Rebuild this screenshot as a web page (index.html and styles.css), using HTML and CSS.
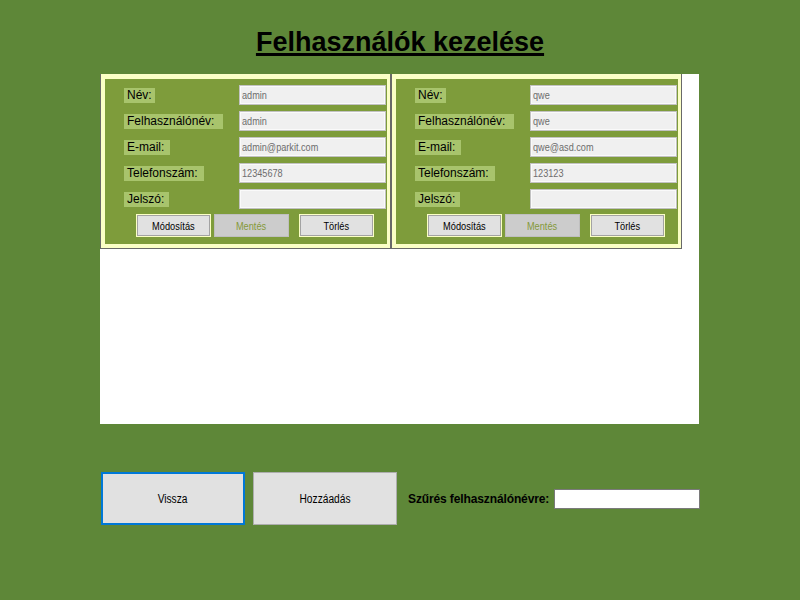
FILE: index.html
```html
<!DOCTYPE html>
<html lang="hu">
<head>
<meta charset="utf-8">
<title>Felhasználók kezelése</title>
<link rel="stylesheet" href="styles.css">
</head>
<body>
<h1 class="title">Felhasználók kezelése</h1>
<div class="panel">
  <div class="card">
    <div class="card-body">
      <div class="fields">
        <span class="lbl w-nev">Név:</span><div class="inp"><span class="sq">admin</span></div>
        <span class="lbl w-user">Felhasználónév:</span><div class="inp"><span class="sq">admin</span></div>
        <span class="lbl w-mail">E-mail:</span><div class="inp"><span class="sq">admin@parkit.com</span></div>
        <span class="lbl w-tel">Telefonszám:</span><div class="inp"><span class="sq">12345678</span></div>
        <span class="lbl w-pass">Jelszó:</span><div class="inp"></div>
      </div>
      <div class="actions">
        <button class="cbtn"><span class="sqc">Módosítás</span></button>
        <button class="cbtn save" disabled><span class="sqc">Mentés</span></button>
        <button class="cbtn del"><span class="sqc">Törlés</span></button>
      </div>
    </div>
  </div>
  <div class="card">
    <div class="card-body">
      <div class="fields">
        <span class="lbl w-nev">Név:</span><div class="inp"><span class="sq">qwe</span></div>
        <span class="lbl w-user">Felhasználónév:</span><div class="inp"><span class="sq">qwe</span></div>
        <span class="lbl w-mail">E-mail:</span><div class="inp"><span class="sq">qwe@asd.com</span></div>
        <span class="lbl w-tel">Telefonszám:</span><div class="inp"><span class="sq">123123</span></div>
        <span class="lbl w-pass">Jelszó:</span><div class="inp"></div>
      </div>
      <div class="actions">
        <button class="cbtn"><span class="sqc">Módosítás</span></button>
        <button class="cbtn save" disabled><span class="sqc">Mentés</span></button>
        <button class="cbtn del"><span class="sqc">Törlés</span></button>
      </div>
    </div>
  </div>
</div>
<div class="bottom">
  <button class="bbtn focus"><span class="sqb">Vissza</span></button>
  <button class="bbtn add"><span class="sqb">Hozzáadás</span></button>
  <span class="filter-lbl">Szűrés felhasználónévre:</span>
  <div class="filter-inp"></div>
</div>
</body>
</html>
```
FILE: styles.css
```css
* { box-sizing: border-box; }
html, body { margin: 0; padding: 0; }
body {
  width: 800px;
  height: 600px;
  background: #5e8738;
  font-family: "Liberation Sans", Arial, sans-serif;
  overflow: hidden;
}
.title {
  margin: 27px 0 0 0;
  font-size: 27px;
  line-height: 31px;
  font-weight: bold;
  color: #000;
  text-align: center;
  text-decoration: underline;
  text-decoration-thickness: 3px;
  text-underline-offset: 2px;
}
.panel {
  margin: 16px 0 0 100px;
  width: 599px;
  height: 350px;
  background: #fff;
  display: flex;
  align-items: flex-start;
}
.card {
  width: 291px;
  background: #fbffc6;
  border-left: 1px solid #696969;
  border-right: 1px solid #696969;
  border-bottom: 1px solid #696969;
  padding: 5px 3px 4px 4px;
}
.card-body {
  background: #7e9c3b;
  padding: 6px 0 7px 19px;
}
.fields {
  display: grid;
  grid-template-columns: 115px 147px;
  grid-auto-rows: 20px;
  row-gap: 6px;
  align-items: center;
}
.lbl {
  justify-self: start;
  background: #a8c46c;
  height: 15px;
  line-height: 15px;
  font-size: 12px;
  color: #000;
  padding: 0 0 0 3px;
  white-space: nowrap;
}
.w-nev { width: 31px; }
.w-user { width: 99px; }
.w-mail { width: 46px; }
.w-tel { width: 80px; }
.w-pass { width: 45px; }
.inp {
  height: 20px;
  background: #f0f0f0;
  border: 1px solid #c2c2c2;
  box-shadow: inset 0 0 0 1px #fafafa;
  font-size: 11px;
  line-height: 18px;
  color: #6d6d6d;
  padding-left: 2px;
  white-space: nowrap;
  overflow: hidden;
}
.sq {
  display: inline-block;
  transform: scaleX(0.83);
  transform-origin: left center;
}
.sqc {
  display: inline-block;
  transform: scaleX(0.84);
  transform-origin: center center;
}
.sqb {
  display: inline-block;
  transform: scaleX(0.85);
  transform-origin: center center;
}
.actions {
  display: flex;
  margin-top: 5px;
  padding-left: 12px;
}
.cbtn {
  width: 75px;
  height: 23px;
  margin: 0;
  padding: 0;
  background: #e1e1e1;
  border: 1px solid #fbffc6;
  box-shadow: inset 0 0 0 1px #a3a3a3;
  font-family: "Liberation Sans", Arial, sans-serif;
  font-size: 11px;
  color: #000;
}
.cbtn.save {
  margin-left: 3px;
  background: #cccccc;
  border: 1px solid #bfbfbf;
  box-shadow: none;
  color: #85993a;
}
.cbtn.del { margin-left: 10px; }
.bottom {
  display: flex;
  align-items: center;
  margin: 48px 0 0 101px;
}
.bbtn {
  width: 144px;
  height: 53px;
  margin: 0;
  padding: 0;
  background: #e1e1e1;
  border: 1px solid #adadad;
  font-family: "Liberation Sans", Arial, sans-serif;
  font-size: 12px;
  color: #000;
}
.bbtn.focus { border: 2px solid #0078d7; }
.bbtn.add { margin-left: 8px; }
.filter-lbl {
  margin-left: 11px;
  font-size: 12px;
  font-weight: bold;
  letter-spacing: -0.12px;
  color: #000;
  white-space: nowrap;
}
.filter-inp {
  margin-left: 5px;
  width: 146px;
  height: 20px;
  background: #fff;
  border: 1px solid #7a7a7a;
}
```
